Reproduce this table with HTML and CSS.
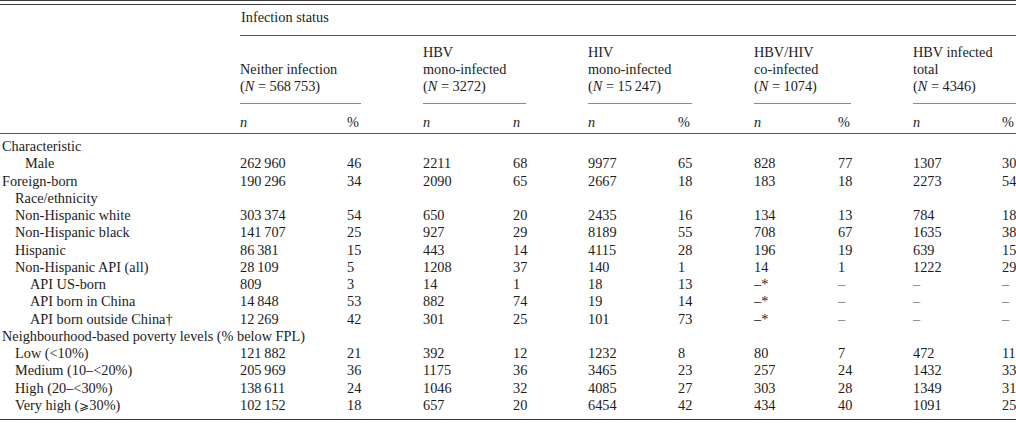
FILE: index.html
```html
<!DOCTYPE html>
<html lang="en">
<head>
<meta charset="utf-8">
<title>Infection status table</title>
<link rel="stylesheet" href="styles.css">
</head>
<body>
<div class="frame">
<table class="data">
  <colgroup>
    <col class="c-label">
    <col class="c-n1"><col class="c-p1">
    <col class="c-n2"><col class="c-p2">
    <col class="c-n3"><col class="c-p3">
    <col class="c-n4"><col class="c-p4">
    <col class="c-n5"><col class="c-p5">
  </colgroup>
  <thead>
    <tr class="h-status">
      <th></th>
      <th colspan="10" class="status">Infection status</th>
    </tr>
    <tr class="h-groups">
      <th></th>
      <th colspan="2"><div class="grp">Neither infection<br>(<i>N</i> = 568&#8201;753)</div></th>
      <th colspan="2"><div class="grp">HBV<br>mono-infected<br>(<i>N</i> = 3272)</div></th>
      <th colspan="2"><div class="grp">HIV<br>mono-infected<br>(<i>N</i> = 15&#8201;247)</div></th>
      <th colspan="2"><div class="grp">HBV/HIV<br>co-infected<br>(<i>N</i> = 1074)</div></th>
      <th colspan="2"><div class="grp last">HBV infected<br>total<br>(<i>N</i> = 4346)</div></th>
    </tr>
    <tr class="h-units">
      <th></th>
      <th><i>n</i></th><th>%</th>
      <th><i>n</i></th><th><i>n</i></th>
      <th><i>n</i></th><th>%</th>
      <th><i>n</i></th><th>%</th>
      <th><i>n</i></th><th>%</th>
    </tr>
  </thead>
  <tbody>
    <tr class="first"><td class="l0">Characteristic</td><td></td><td></td><td></td><td></td><td></td><td></td><td></td><td></td><td></td><td></td></tr>
    <tr><td class="lm">Male</td><td>262&#8201;960</td><td>46</td><td>2211</td><td>68</td><td>9977</td><td>65</td><td>828</td><td>77</td><td>1307</td><td>30</td></tr>
    <tr><td class="l0">Foreign-born</td><td>190&#8201;296</td><td>34</td><td>2090</td><td>65</td><td>2667</td><td>18</td><td>183</td><td>18</td><td>2273</td><td>54</td></tr>
    <tr><td class="l1">Race/ethnicity</td><td></td><td></td><td></td><td></td><td></td><td></td><td></td><td></td><td></td><td></td></tr>
    <tr><td class="l1">Non-Hispanic white</td><td>303&#8201;374</td><td>54</td><td>650</td><td>20</td><td>2435</td><td>16</td><td>134</td><td>13</td><td>784</td><td>18</td></tr>
    <tr><td class="l1">Non-Hispanic black</td><td>141&#8201;707</td><td>25</td><td>927</td><td>29</td><td>8189</td><td>55</td><td>708</td><td>67</td><td>1635</td><td>38</td></tr>
    <tr><td class="l1">Hispanic</td><td>86&#8201;381</td><td>15</td><td>443</td><td>14</td><td>4115</td><td>28</td><td>196</td><td>19</td><td>639</td><td>15</td></tr>
    <tr><td class="l1">Non-Hispanic API (all)</td><td>28&#8201;109</td><td>5</td><td>1208</td><td>37</td><td>140</td><td>1</td><td>14</td><td>1</td><td>1222</td><td>29</td></tr>
    <tr><td class="l2">API US-born</td><td>809</td><td>3</td><td>14</td><td>1</td><td>18</td><td>13</td><td>&ndash;*</td><td class="dash">&ndash;</td><td class="dash">&ndash;</td><td class="dash">&ndash;</td></tr>
    <tr><td class="l2">API born in China</td><td>14&#8201;848</td><td>53</td><td>882</td><td>74</td><td>19</td><td>14</td><td>&ndash;*</td><td class="dash">&ndash;</td><td class="dash">&ndash;</td><td class="dash">&ndash;</td></tr>
    <tr><td class="l2">API born outside China&dagger;</td><td>12&#8201;269</td><td>42</td><td>301</td><td>25</td><td>101</td><td>73</td><td>&ndash;*</td><td class="dash">&ndash;</td><td class="dash">&ndash;</td><td class="dash">&ndash;</td></tr>
    <tr><td class="l0">Neighbourhood-based poverty levels (% below FPL)</td><td></td><td></td><td></td><td></td><td></td><td></td><td></td><td></td><td></td><td></td></tr>
    <tr><td class="l1">Low (&lt;10%)</td><td>121&#8201;882</td><td>21</td><td>392</td><td>12</td><td>1232</td><td>8</td><td>80</td><td>7</td><td>472</td><td>11</td></tr>
    <tr><td class="l1">Medium (10&ndash;&lt;20%)</td><td>205&#8201;969</td><td>36</td><td>1175</td><td>36</td><td>3465</td><td>23</td><td>257</td><td>24</td><td>1432</td><td>33</td></tr>
    <tr><td class="l1">High (20&ndash;&lt;30%)</td><td>138&#8201;611</td><td>24</td><td>1046</td><td>32</td><td>4085</td><td>27</td><td>303</td><td>28</td><td>1349</td><td>31</td></tr>
    <tr class="last"><td class="l1">Very high (<span class="geq">&#10878;</span>30%)</td><td>102&#8201;152</td><td>18</td><td>657</td><td>20</td><td>6454</td><td>42</td><td>434</td><td>40</td><td>1091</td><td>25</td></tr>
  </tbody>
</table>
</div>
</body>
</html>
```

FILE: styles.css
```css
html, body {
  margin: 0;
  padding: 0;
  background: #ffffff;
}

body {
  width: 1016px;
  font-family: "Liberation Serif", "DejaVu Serif", serif;
  font-size: 14.3px;
  color: #1c1c1c;
}

.frame {
  border-top: 1px solid #3a3a3a;
  border-bottom: 1px solid #3a3a3a;
  padding: 3px 0;
}

.data {
  width: 1016px;
  table-layout: fixed;
  border-collapse: separate;
  border-spacing: 0;
  border-top: 1px solid #3a3a3a;
  border-bottom: 1px solid #3a3a3a;
}

.c-label { width: 240px; }
.c-n1 { width: 107px; }
.c-p1 { width: 76px; }
.c-n2 { width: 90px; }
.c-p2 { width: 75px; }
.c-n3 { width: 90px; }
.c-p3 { width: 76px; }
.c-n4 { width: 84px; }
.c-p4 { width: 75px; }
.c-n5 { width: 89px; }
.c-p5 { width: 14px; }

th, td {
  padding: 0;
  text-align: left;
  font-weight: normal;
  white-space: nowrap;
  overflow: visible;
}

thead th {
  line-height: 17px;
  vertical-align: bottom;
}

.h-status th {
  padding-top: 4px;
  padding-bottom: 9px;
}

.h-status .status {
  border-bottom: 1px solid #555555;
  padding-left: 1px;
}

.h-groups th {
  padding-top: 8px;
}

.grp {
  margin-right: 62px;
  padding-bottom: 8px;
  border-bottom: 1px solid #8a8a8a;
}

.grp.last {
  margin-right: 0;
}

.h-units th {
  padding-top: 10px;
  padding-bottom: 2px;
  border-bottom: 1px solid #555555;
}

tbody td {
  line-height: 17.25px;
}

tbody tr.first td {
  padding-top: 4px;
}

tbody tr.last td {
  padding-bottom: 4px;
}

.l0 { padding-left: 2px; }
.lm { padding-left: 25px; }
.l1 { padding-left: 15px; }
.l2 { padding-left: 30px; }

.dash {
  color: #777777;
}

.geq {
  font-family: "DejaVu Serif", serif;
  font-size: 12px;
}
```
